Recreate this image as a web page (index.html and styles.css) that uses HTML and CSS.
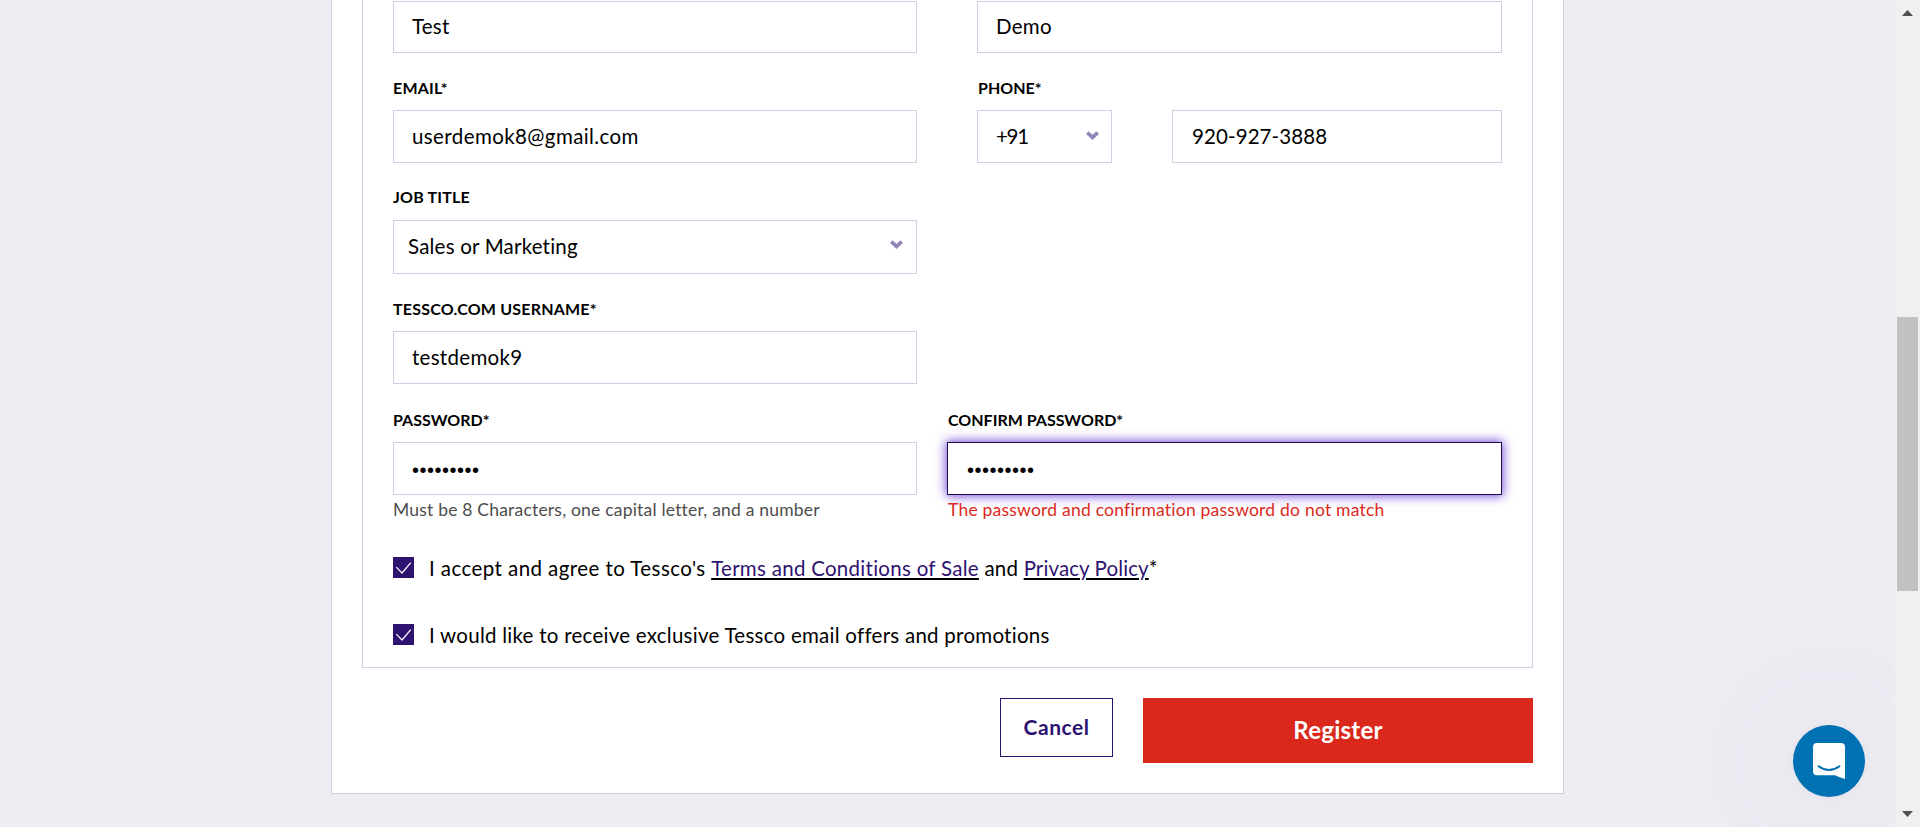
FILE: index.html
```html
<!DOCTYPE html>
<html lang="en">
<head>
<meta charset="utf-8">
<title>Register</title>
<link rel="stylesheet" href="styles.css">
</head>
<body>
<div class="page">
  <main class="main">
    <form class="card">
      <section class="panel">
        <div class="grid">
          <div class="field first"><div class="box short">Test</div></div>
          <div class="field first"><div class="box short demo">Demo</div></div>

          <div class="field"><label class="label email-label">EMAIL*</label><div class="box email">userdemok8@gmail.com</div></div>
          <div class="field"><label class="label phone-label">PHONE*</label>
            <div class="phone">
              <div class="box code"><span>+91</span><svg class="chev" viewBox="0 0 13 9"><path d="M1.3 1.6 6.5 6.4 11.7 1.6"/></svg></div>
              <div class="box number">920-927-3888</div>
            </div>
          </div>

          <div class="field"><label class="label job-label">JOB TITLE</label><div class="box job"><span>Sales or Marketing</span><svg class="chev" viewBox="0 0 13 9"><path d="M1.3 1.6 6.5 6.4 11.7 1.6"/></svg></div></div>
          <div></div>

          <div class="field"><label class="label username-label">TESSCO.COM USERNAME*</label><div class="box user">testdemok9</div></div>
          <div></div>

          <div class="field last"><label class="label tight">PASSWORD*</label><div class="box secret">•••••••••</div><p class="hint">Must be 8 Characters, one capital letter, and a number</p></div>
          <div class="field last wide"><label class="label tight">CONFIRM PASSWORD*</label><div class="box secret focus">•••••••••</div><p class="hint error">The password and confirmation password do not match</p></div>
        </div>
        <div class="check terms">
          <span class="tick"><svg viewBox="0 0 21 21"><path d="M3.3 10.2 9 16 17.8 5.6"/></svg></span>
          <p class="check-text"><span class="accept">I accept and agree to Tessco's</span> <a class="sale">Terms and Conditions of Sale</a> <span class="and">and</span> <a class="privacy">Privacy Policy</a>*</p>
        </div>
        <div class="check offers">
          <span class="tick"><svg viewBox="0 0 21 21"><path d="M3.3 10.2 9 16 17.8 5.6"/></svg></span>
          <p class="check-text">I would like to receive exclusive Tessco email offers and promotions</p>
        </div>
      </section>
      <div class="actions">
        <button type="button" class="btn cancel">Cancel</button>
        <button type="button" class="btn register">Register</button>
      </div>
    </form>
    <div class="chat">
      <svg viewBox="0 0 32 36"><path class="bubble" d="M4 0H28Q32 0 32 4V36Q27 34.8 22 32.3H4Q0 32.3 0 28.3V4Q0 0 4 0Z"/><path class="smile" d="M5.5 23.2Q16 30.6 26.5 23.2"/></svg>
    </div>
  </main>
  <aside class="scroll">
    <svg class="arrow" viewBox="0 0 11 6"><path d="M0 6 5.5 0 11 6Z"/></svg>
    <div class="thumb"></div>
    <svg class="arrow down" viewBox="0 0 11 6"><path d="M0 0 5.5 6 11 0Z"/></svg>
  </aside>
</div>
</body>
</html>
```
FILE: styles.css
```css
* { box-sizing: border-box; }
body { margin: 0; background: #eeedf4; font: 20.5px/26px Lato, "Open Sans", sans-serif; color: #000; overflow: hidden; }
p { margin: 0; }
.page { display: flex; height: 827px; overflow: hidden; }
.main { flex: 1; position: relative; overflow: hidden; }
.card { width: 1233px; height: 794px; margin: 0 auto; padding: 0 30px; background: #fff; border: 1px solid #d1cee4; border-top: 0; }
.panel { height: 668px; padding: 1px 30px 0; border: 1px solid #d1cee4; border-top: 0; }
.grid { display: grid; grid-template-columns: 524px 525px; column-gap: 60px; }
.label { display: block; height: 57px; padding: 25px 0 12px; font-size: 16px; font-weight: 700; line-height: 20px; letter-spacing: .1px; white-space: nowrap; }
.email-label, .username-label { letter-spacing: .2px; }
.phone-label { padding-left: 1px; letter-spacing: 0; }
.job-label { padding: 24px 0 13px; letter-spacing: .2px; }
.last .label { height: 58px; padding-top: 26px; }
.label.tight { letter-spacing: 0; }
.box { display: flex; align-items: center; justify-content: space-between; height: 53px; padding: 0 0 2px 18px; border: 1px solid #d1cee4; background: #fff; letter-spacing: .2px; white-space: nowrap; }
.short { height: 52px; padding-bottom: 3px; }
.demo { letter-spacing: .3px; }
.email { letter-spacing: .4px; }
.phone { display: grid; grid-template-columns: 135px 330px; column-gap: 60px; }
.code { padding: 0 12px 2px 18px; letter-spacing: -1.3px; }
.number { padding-left: 19px; letter-spacing: .09px; }
.job { height: 54px; padding: 0 13px 3px 14px; }
.user { letter-spacing: .29px; }
.chev { width: 13px; height: 9px; margin-top: -1px; fill: none; stroke: #9486b8; stroke-width: 3.7; overflow: visible; }
.job .chev { margin-top: -3px; }
.secret { padding-top: 3px; padding-bottom: 0; font-family: "Liberation Sans", sans-serif; font-size: 20px; letter-spacing: .5px; }
.wide { margin-left: -30px; }
.wide .label, .wide .hint { padding-left: 1px; }
.focus { padding-left: 19px; border-color: #1f0a52; box-shadow: 0 0 10px 1px rgba(80, 25, 205, .8); }
.hint { font-size: 17.5px; line-height: 30px; letter-spacing: .2px; color: #4d4d4d; white-space: nowrap; }
.error { color: #da291c; letter-spacing: .22px; }
.check { display: flex; align-items: center; gap: 15px; height: 21px; }
.terms { margin-top: 32px; }
.offers { margin-top: 46px; }
.tick { width: 21px; height: 21px; background: #2e1371; }
.tick svg { display: block; width: 21px; height: 21px; fill: none; stroke: #fff; stroke-width: 1.2; }
.check-text { letter-spacing: .26px; white-space: nowrap; }
.accept { letter-spacing: .43px; }
.and { letter-spacing: .2px; }
.check-text a { color: #2e1371; letter-spacing: .28px; text-decoration: underline 2px #000; text-underline-offset: 2px; }
.check-text .privacy { letter-spacing: .1px; }
.actions { display: flex; align-items: flex-start; justify-content: flex-end; gap: 30px; padding-top: 30px; }
.btn { padding: 0 0 2px; border: 0; border-radius: 0; font-family: inherit; font-weight: 700; }
.cancel { width: 113px; height: 59px; border: 1px solid #2e1371; background: #fff; color: #2e1371; font-size: 21px; letter-spacing: .5px; }
.register { width: 390px; height: 65px; background: #da291c; color: #fff; font-size: 24px; letter-spacing: .27px; }
.chat { position: absolute; left: 1793px; top: 725px; width: 72px; height: 72px; padding: 18px 20px; border-radius: 50%; background: #0071b2; box-shadow: 0 1px 7px rgba(90, 40, 70, .05), 0 2px 160px rgba(90, 80, 90, .2); }
.chat svg { display: block; width: 32px; height: 36px; }
.bubble { fill: #fff; }
.smile { fill: none; stroke: #0071b2; stroke-width: 2; stroke-linecap: round; }
.scroll { display: flex; flex-direction: column; align-items: center; width: 25px; padding: 10px 0; background: #f0f0f0; }
.arrow { width: 11px; height: 6px; fill: #505050; }
.thumb { width: 21px; height: 274px; margin-top: 301px; background: #c1c1c1; }
.down { margin-top: auto; }
```
